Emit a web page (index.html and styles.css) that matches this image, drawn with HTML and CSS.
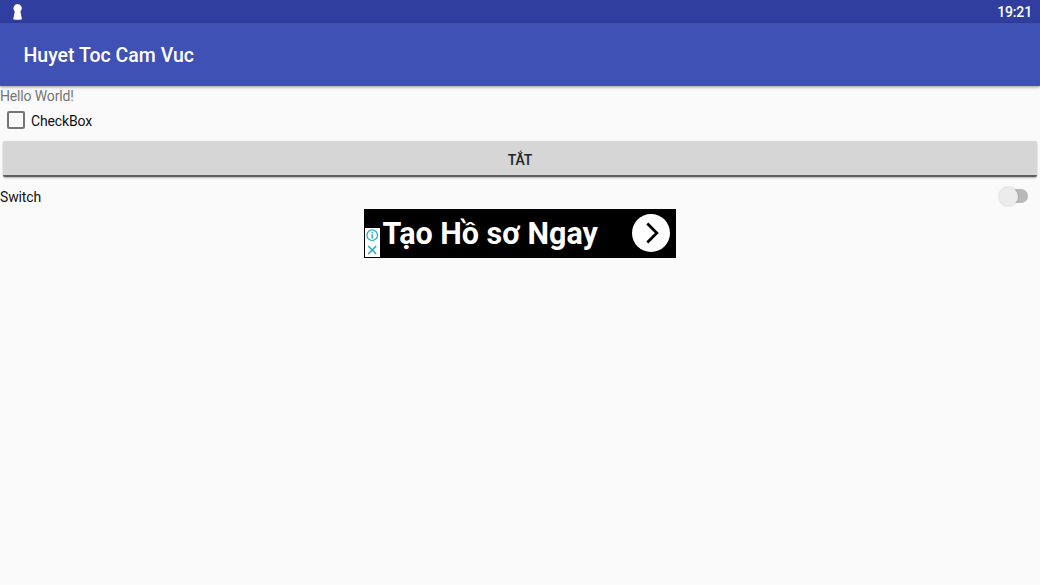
FILE: index.html
```html
<!DOCTYPE html>
<html lang="vi">
<head>
    <meta charset="UTF-8">
    <meta name="viewport" content="width=device-width, initial-scale=1.0">
    <title>Huyet Toc Cam Vuc</title>
    <link rel="stylesheet" href="styles.css">
</head>
<body>
    <div class="status-bar">
        <svg class="status-icon" width="10" height="16" viewBox="0 0 10 16">
            <path d="M4.6 0A4.3 4.3 0 0 0 1.8 7.4L.2 15.2Q4.6 16.2 9 15.2L7.4 7.4A4.3 4.3 0 0 0 4.6 0z" fill="#fff"/>
        </svg>
        <span class="clock">19:21</span>
    </div>
    <header class="app-bar">
        <h1>Huyet Toc Cam Vuc</h1>
    </header>
    <main class="content">
        <p class="hello">Hello World!</p>
        <label class="checkbox-row">
            <input type="checkbox" class="checkbox">
            <span class="label">CheckBox</span>
        </label>
        <button class="toggle-button">TẮT</button>
        <label class="switch-row">
            <span class="label">Switch</span>
            <span class="switch"><span class="thumb"></span></span>
        </label>
        <div class="ad-banner">
            <span class="ad-text">Tạo Hồ sơ Ngay</span>
            <svg class="ad-arrow" width="38" height="38" viewBox="0 0 38 38">
                <circle cx="19" cy="19" r="19" fill="#fff"/>
                <path d="M15.3 9.5L24.8 19l-9.5 9.5" fill="none" stroke="#000" stroke-width="2.8"/>
            </svg>
            <div class="ad-choices">
                <svg width="15" height="29" viewBox="0 0 15 29">
                    <g fill="none" stroke="#22aab8" stroke-width="1.2">
                        <circle cx="7.2" cy="7.2" r="5.3"/>
                        <path d="M7.2 6.3v4.2M7.2 3.8v1.4" stroke-width="1.4"/>
                        <path d="M3.2 18l8 8M11.2 18l-8 8" stroke-width="1.5"/>
                    </g>
                </svg>
            </div>
        </div>
    </main>
</body>
</html>
```
FILE: styles.css
```css
body {
    margin: 0;
    font-family: Roboto, "Noto Sans", sans-serif;
    font-size: 14px;
    letter-spacing: -0.15px;
    background: #fafafa;
    color: #111;
    height: 100vh;
    overflow: hidden;
}
.status-bar {
    display: flex;
    justify-content: space-between;
    height: 23px;
    padding: 0 8px 0 13px;
    background: #303f9f;
    color: #fff;
}
.status-icon {
    margin-top: 4px;
}
.clock {
    font-size: 14px;
    font-weight: 500;
    line-height: 25px;
}
.app-bar {
    display: flex;
    align-items: center;
    box-sizing: border-box;
    height: 63px;
    padding: 2px 0 0 23.5px;
    background: #3f51b5;
    box-shadow: 0 1px 3px rgba(0, 0, 0, 0.4);
}
.app-bar h1 {
    margin: 0;
    font-size: 19.5px;
    font-weight: 500;
    letter-spacing: 0;
    color: #fff;
}
.hello {
    margin: 0;
    height: 19px;
    line-height: 21px;
    color: #757575;
}
.label {
    padding-top: 2px;
}
.checkbox-row {
    display: flex;
    align-items: center;
    gap: 6px;
    height: 30px;
    padding-left: 7px;
}
.checkbox {
    appearance: none;
    box-sizing: border-box;
    width: 18px;
    height: 18px;
    margin: 0;
    border: 2px solid #757575;
    border-radius: 2px;
}
.toggle-button {
    display: block;
    box-sizing: border-box;
    width: calc(100% - 6px);
    height: 36px;
    margin: 6px 3px 0;
    padding: 4px 0 0;
    border: none;
    border-bottom: 2px solid #606060;
    border-radius: 2px;
    background: #d6d6d6;
    box-shadow: 0 1px 2px rgba(0, 0, 0, 0.3);
    font-family: inherit;
    font-size: 14px;
    font-weight: 500;
    letter-spacing: -0.15px;
    color: #222;
}
.switch-row {
    display: flex;
    align-items: center;
    justify-content: space-between;
    height: 26px;
    margin-top: 6px;
    padding-right: 12px;
}
.switch {
    display: flex;
    align-items: center;
    width: 27px;
    height: 14px;
    border-radius: 7px;
    background: #b9b9b9;
}
.thumb {
    flex: none;
    width: 19px;
    height: 19px;
    margin-left: -2.5px;
    border-radius: 50%;
    background: #ececec;
    box-shadow: 0 0 2px rgba(0, 0, 0, 0.25);
}
.ad-banner {
    position: relative;
    display: flex;
    align-items: center;
    justify-content: space-between;
    box-sizing: border-box;
    width: 312px;
    height: 49px;
    margin: 0 auto;
    padding: 0 6px 1px 18.5px;
    background: #000;
    color: #fff;
}
.ad-text {
    font-size: 30.5px;
    font-weight: 700;
    letter-spacing: 0;
}
.ad-choices {
    position: absolute;
    left: 1px;
    bottom: 1px;
    width: 15px;
    height: 29px;
    background: #fff;
}
```
